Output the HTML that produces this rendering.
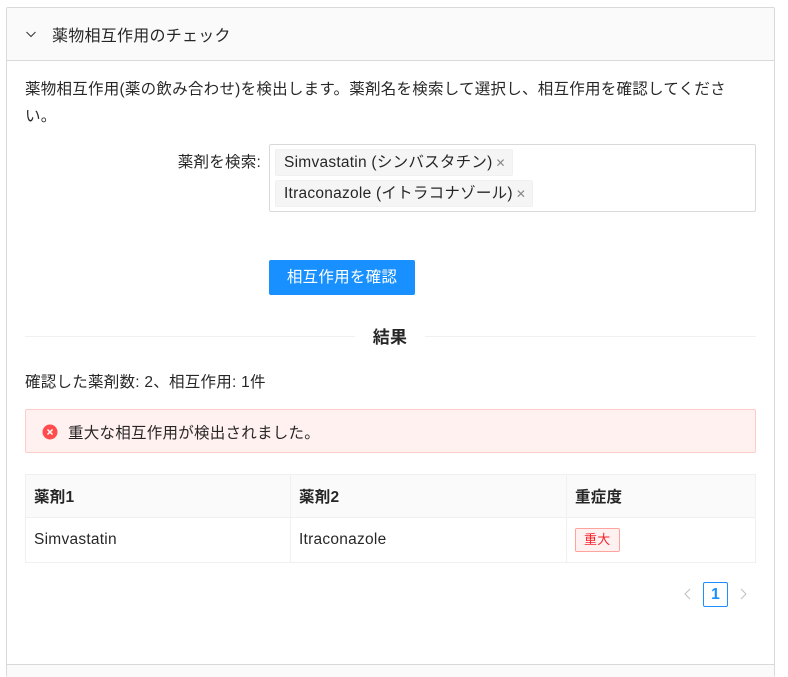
<!DOCTYPE html>
<html><head><meta charset="utf-8"><style>
*{box-sizing:border-box;margin:0;padding:0}
html{width:788px;height:677px;overflow:hidden}
body{width:788px;height:677px;background:#fff;font-family:"Liberation Sans","Noto Sans CJK JP",sans-serif;font-size:15.5px;letter-spacing:0.25px;color:rgba(0,0,0,.85);position:relative;overflow:hidden}
.box{position:absolute;left:6px;top:7px;width:769px;height:670px;border:1px solid #d9d9d9;border-bottom:none;border-radius:2px;overflow:hidden}
.hd{height:53px;background:#fafafa;border-bottom:1px solid #d9d9d9;display:flex;align-items:center;padding-left:18px;font-size:16px}
.foot{position:absolute;left:0;right:0;top:656px;bottom:0;background:#fafafa;border-top:1px solid #d9d9d9}
.a{position:absolute}
.tag{position:absolute;left:5px;height:27px;background:#f5f5f5;border:1px solid #f0f0f0;border-radius:2px;padding:0 6px 0 8px;line-height:25px;white-space:nowrap}
.tag span{color:rgba(0,0,0,.45);font-size:12px;margin-left:3px}
table{border-collapse:collapse;position:absolute;left:25px;top:474px;width:731px}
td,th{border:1px solid #f0f0f0;padding:0 8px;text-align:left}
th{background:#fafafa;height:43px;font-weight:bold}
td{height:45px}
</style></head><body>
<div class="box">
<div class="hd"><svg width="12" height="12" viewBox="0 0 12 12" style="margin-right:15px"><path d="M1.5 4 L6 8.5 L10.5 4" fill="none" stroke="#333" stroke-width="1"/></svg>薬物相互作用のチェック</div>
<div class="foot"></div>
</div>
<div class="a" style="left:25px;top:76px;width:712px;line-height:27px">薬物相互作用(薬の飲み合わせ)を検出します。薬剤名を検索して選択し、相互作用を確認してくださ<br>い。</div>
<div class="a" style="left:150px;top:150px;width:111px;text-align:right">薬剤を検索:</div>
<div class="a" style="left:269px;top:144px;width:487px;height:68px;border:1px solid #d9d9d9;border-radius:2px">
<div class="tag" style="top:4px">Simvastatin (シンバスタチン)<span>✕</span></div>
<div class="tag" style="top:35px">Itraconazole (イトラコナゾール)<span>✕</span></div>
</div>
<div class="a" style="left:269px;top:260px;width:146px;height:35px;background:#1890ff;color:#fff;border-radius:2px;text-align:center;line-height:35px">相互作用を確認</div>
<div class="a" style="left:25px;top:336px;width:330px;border-top:1px solid #f0f0f0"></div>
<div class="a" style="left:425px;top:336px;width:331px;border-top:1px solid #f0f0f0"></div>
<div class="a" style="left:355px;top:323px;width:70px;text-align:center;font-weight:bold;font-size:17px">結果</div>
<div class="a" style="left:25px;top:370px">確認した薬剤数: 2、相互作用: 1件</div>
<div class="a" style="left:25px;top:409px;width:731px;height:44px;background:#fff1f0;border:1px solid #ffccc7;border-radius:2px">
<svg class="a" style="left:16px;top:14px" width="16" height="16" viewBox="0 0 16 16"><circle cx="8" cy="8" r="7.5" fill="#ff4d4f"/><path d="M5.5 5.5 L10.5 10.5 M10.5 5.5 L5.5 10.5" stroke="#fff" stroke-width="1.5"/></svg>
<div class="a" style="left:42px;top:11px">重大な相互作用が検出されました。</div>
</div>
<table><tr><th style="width:265px">薬剤1</th><th style="width:276px">薬剤2</th><th>重症度</th></tr>
<tr><td>Simvastatin</td><td>Itraconazole</td><td><span style="display:inline-block;border:1px solid #ffa39e;background:#fff1f0;color:#f5222d;font-size:13px;padding:0 8px;line-height:22px;border-radius:2px">重大</span></td></tr></table>
<svg class="a" style="left:683px;top:588px" width="10" height="12" viewBox="0 0 10 12"><path d="M7 1 L2 6 L7 11" fill="none" stroke="#bfbfbf" stroke-width="1"/></svg>
<div class="a" style="left:703px;top:582px;width:25px;height:25px;border:1px solid #1890ff;border-radius:2px;color:#1890ff;text-align:center;line-height:23px;font-weight:bold">1</div>
<svg class="a" style="left:738px;top:588px" width="10" height="12" viewBox="0 0 10 12"><path d="M3 1 L8 6 L3 11" fill="none" stroke="#bfbfbf" stroke-width="1"/></svg>
</body></html>
